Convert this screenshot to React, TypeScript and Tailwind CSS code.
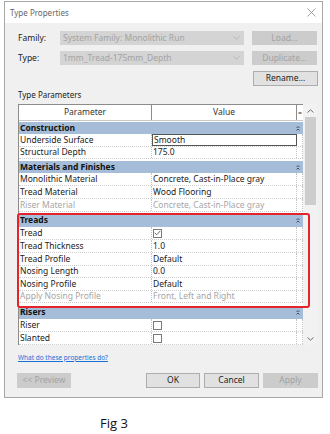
import React from 'react'

type Row =
    | { kind: 'group'; label: string; h: string; mt: string }
    | { kind: 'row'; label: string; value?: string; h: string; muted?: boolean; check?: 'on' | 'off'; edit?: boolean }

const rows: Row[] = [
    { kind: 'group', label: 'Construction', h: 'h-[12px]', mt: 'mt-[1px]' },
    { kind: 'row', label: 'Underside Surface', value: 'Smooth', h: 'h-[13px]', edit: true },
    { kind: 'row', label: 'Structural Depth', value: '175.0', h: 'h-[12px]' },
    { kind: 'group', label: 'Materials and Finishes', h: 'h-[12px]', mt: 'mt-[2px]' },
    { kind: 'row', label: 'Monolithic Material', value: 'Concrete, Cast-in-Place gray', h: 'h-[13px]' },
    { kind: 'row', label: 'Tread Material', value: 'Wood Flooring', h: 'h-[13px]' },
    { kind: 'row', label: 'Riser Material', value: 'Concrete, Cast-in-Place gray', h: 'h-[13px]', muted: true },
    { kind: 'group', label: 'Treads', h: 'h-[13px]', mt: 'mt-[2px]' },
    { kind: 'row', label: 'Tread', check: 'on', h: 'h-[13px]' },
    { kind: 'row', label: 'Tread Thickness', value: '1.0', h: 'h-[13px]' },
    { kind: 'row', label: 'Tread Profile', value: 'Default', h: 'h-[13px]' },
    { kind: 'row', label: 'Nosing Length', value: '0.0', h: 'h-[12px]' },
    { kind: 'row', label: 'Nosing Profile', value: 'Default', h: 'h-[13px]' },
    { kind: 'row', label: 'Apply Nosing Profile', value: 'Front, Left and Right', h: 'h-[12px]', muted: true },
    { kind: 'group', label: 'Risers', h: 'h-[13px]', mt: 'mt-[3px]' },
    { kind: 'row', label: 'Riser', check: 'off', h: 'h-[13px]' },
    { kind: 'row', label: 'Slanted', check: 'off', h: 'h-[13px]' },
]

function Chevron() {
    return (
        <svg width="7" height="4" viewBox="0 0 7 4" className="shrink-0">
            <path d="M0.5 0.5 L3.5 3.2 L6.5 0.5" fill="none" stroke="#b0b0b0" strokeWidth="0.8" />
        </svg>
    )
}

function Collapse() {
    return (
        <svg width="4" height="5" viewBox="0 0 4 5">
            <path d="M0.5 2 L2 0.5 L3.5 2 M0.5 4.5 L2 3 L3.5 4.5" fill="none" stroke="#444" strokeWidth="0.9" />
        </svg>
    )
}

function Checkbox({ on }: { on: boolean }) {
    return (
        <div className="w-[9px] h-[9px] border border-[#7a7a7a] bg-white flex items-center justify-center">
            {on && (
                <svg width="7" height="6" viewBox="0 0 7 6">
                    <path d="M0.8 3 L2.7 4.8 L6.2 1" fill="none" stroke="#555" strokeWidth="0.9" />
                </svg>
            )}
        </div>
    )
}

function Combo({ text }: { text: string }) {
    return (
        <div className="w-[184px] h-[14px] bg-[#d4d4d4] flex items-center justify-between pl-[3px] pr-[4px] text-[#a3a3a3]">
            <span>{text}</span>
            <Chevron />
        </div>
    )
}

function Btn({ label, disabled, w = 'w-[65px]', h = 'h-[14px]' }: { label: string; disabled?: boolean; w?: string; h?: string }) {
    return (
        <div
            className={`${w} ${h} flex items-center justify-center ${disabled
                ? 'bg-[#cccccc] text-[#a3a3a3]'
                : 'bg-[#e1e1e1] border border-[#adadad] text-[#222]'
                }`}
        >
            {label}
        </div>
    )
}

export default function App() {
    return (
        <div className="relative w-[330px] h-[434px] bg-white text-[8.5px] leading-none text-[#222] font-['Noto_Sans',sans-serif] pt-[1px]">
            {/* dialog */}
            <div className="ml-[4px] w-[319px] h-[397px] border border-[#a8a8a8] flex flex-col">
                <div className="h-[21px] bg-white flex items-center justify-between pl-[5px] pr-[6px] shrink-0">
                    <span className="text-[8px] text-[#666]">Type Properties</span>
                    <svg width="9" height="9" viewBox="0 0 9 9">
                        <path d="M0.5 0.5 L8.5 8.5 M8.5 0.5 L0.5 8.5" stroke="#888" strokeWidth="0.8" />
                    </svg>
                </div>

                <div className="flex-1 bg-[#f0f0f0] pl-[13px] pr-[4px] pt-[8px] flex flex-col">
                    <div className="flex items-center">
                        <span className="w-[42px]">Family:</span>
                        <Combo text="System Family: Monolithic Run" />
                        <div className="ml-[8px]"><Btn label="Load..." disabled /></div>
                    </div>
                    <div className="flex items-center mt-[6px]">
                        <span className="w-[42px]">Type:</span>
                        <Combo text="1mm_Tread-175mm_Depth" />
                        <div className="ml-[8px]"><Btn label="Duplicate..." disabled /></div>
                    </div>
                    <div className="flex justify-end mt-[6px]">
                        <Btn label="Rename..." h="h-[15px]" />
                    </div>

                    <div className="mt-[5px] text-[8px] h-[12px]">Type Parameters</div>

                    {/* property grid */}
                    <div className="flex mt-[1px] w-[299px]">
                        <div className="w-[285px] bg-white border-l border-t border-[#8c8c8c] flex flex-col">
                            <div className="flex h-[16px] border-b border-[#c8c8c8] text-[#333]">
                                <div className="w-[133px] flex items-center justify-center border-r border-[#8c8c8c]">Parameter</div>
                                <div className="w-[145px] flex items-center justify-center border-r border-[#8c8c8c]">Value</div>
                                <div className="w-[6px] flex items-center justify-center text-[7px]">=</div>
                            </div>
                            {rows.map((r, i) =>
                                r.kind === 'group' ? (
                                    <div key={i} className={`${r.h} ${r.mt} bg-[#a5bdd9] flex items-center justify-between pl-[1px] pr-[3px] font-bold text-[#111]`}>
                                        <span>{r.label}</span>
                                        <Collapse />
                                    </div>
                                ) : (
                                    <div key={i} className={`${r.h} flex border-b border-dotted border-[#cfcfcf] ${r.muted ? 'text-[#a6a6a6]' : 'text-[#222]'}`}>
                                        <div className="w-[133px] flex items-center pl-[1px] border-r border-dotted border-[#c4c4c4]">{r.label}</div>
                                        <div className={`w-[145px] flex items-center pl-[1px] ${r.edit ? 'border border-[#555]' : 'border-r border-dotted border-[#c4c4c4]'}`}>
                                            {r.check ? <Checkbox on={r.check === 'on'} /> : r.value}
                                        </div>
                                        <div className="w-[6px] border-r border-dotted border-[#c4c4c4]" />
                                    </div>
                                ),
                            )}
                        </div>
                        {/* scrollbar */}
                        <div className="w-[14px] bg-[#f2f2f2] flex flex-col items-center">
                            <div className="h-[13px] flex items-center justify-center">
                                <svg width="7" height="4" viewBox="0 0 7 4">
                                    <path d="M0.5 3.5 L3.5 0.8 L6.5 3.5" fill="none" stroke="#606060" strokeWidth="0.9" />
                                </svg>
                            </div>
                            <div className="w-[11px] h-[88px] bg-[#cdcdcd]" />
                            <div className="flex-1" />
                            <div className="h-[13px] flex items-center justify-center">
                                <svg width="7" height="4" viewBox="0 0 7 4">
                                    <path d="M0.5 0.5 L3.5 3.2 L6.5 0.5" fill="none" stroke="#606060" strokeWidth="0.9" />
                                </svg>
                            </div>
                        </div>
                    </div>

                    <div className="mt-[10px] text-[6.5px] text-[#1a6fd6] underline">What do these properties do?</div>

                    <div className="flex mt-[11px] -ml-[1px]">
                        <Btn label="<< Preview" disabled w="w-[54px]" h="h-[15px]" />
                        <div className="flex-1" />
                        <Btn label="OK" w="w-[54px]" h="h-[15px]" />
                        <div className="ml-[4px]"><Btn label="Cancel" w="w-[55px]" h="h-[15px]" /></div>
                        <div className="ml-[4px]"><Btn label="Apply" disabled w="w-[55px]" h="h-[15px]" /></div>
                    </div>
                </div>
            </div>

            <div className="pl-[100px] mt-[19px] text-[13px] text-[#111] font-['Open_Sans',sans-serif]">Fig 3</div>

            {/* red highlight over the Treads group */}
            <div className="absolute left-[17px] top-[213px] w-[293px] h-[95px] border-2 border-[#e3242b] rounded-[3px]" />
        </div>
    )
}
